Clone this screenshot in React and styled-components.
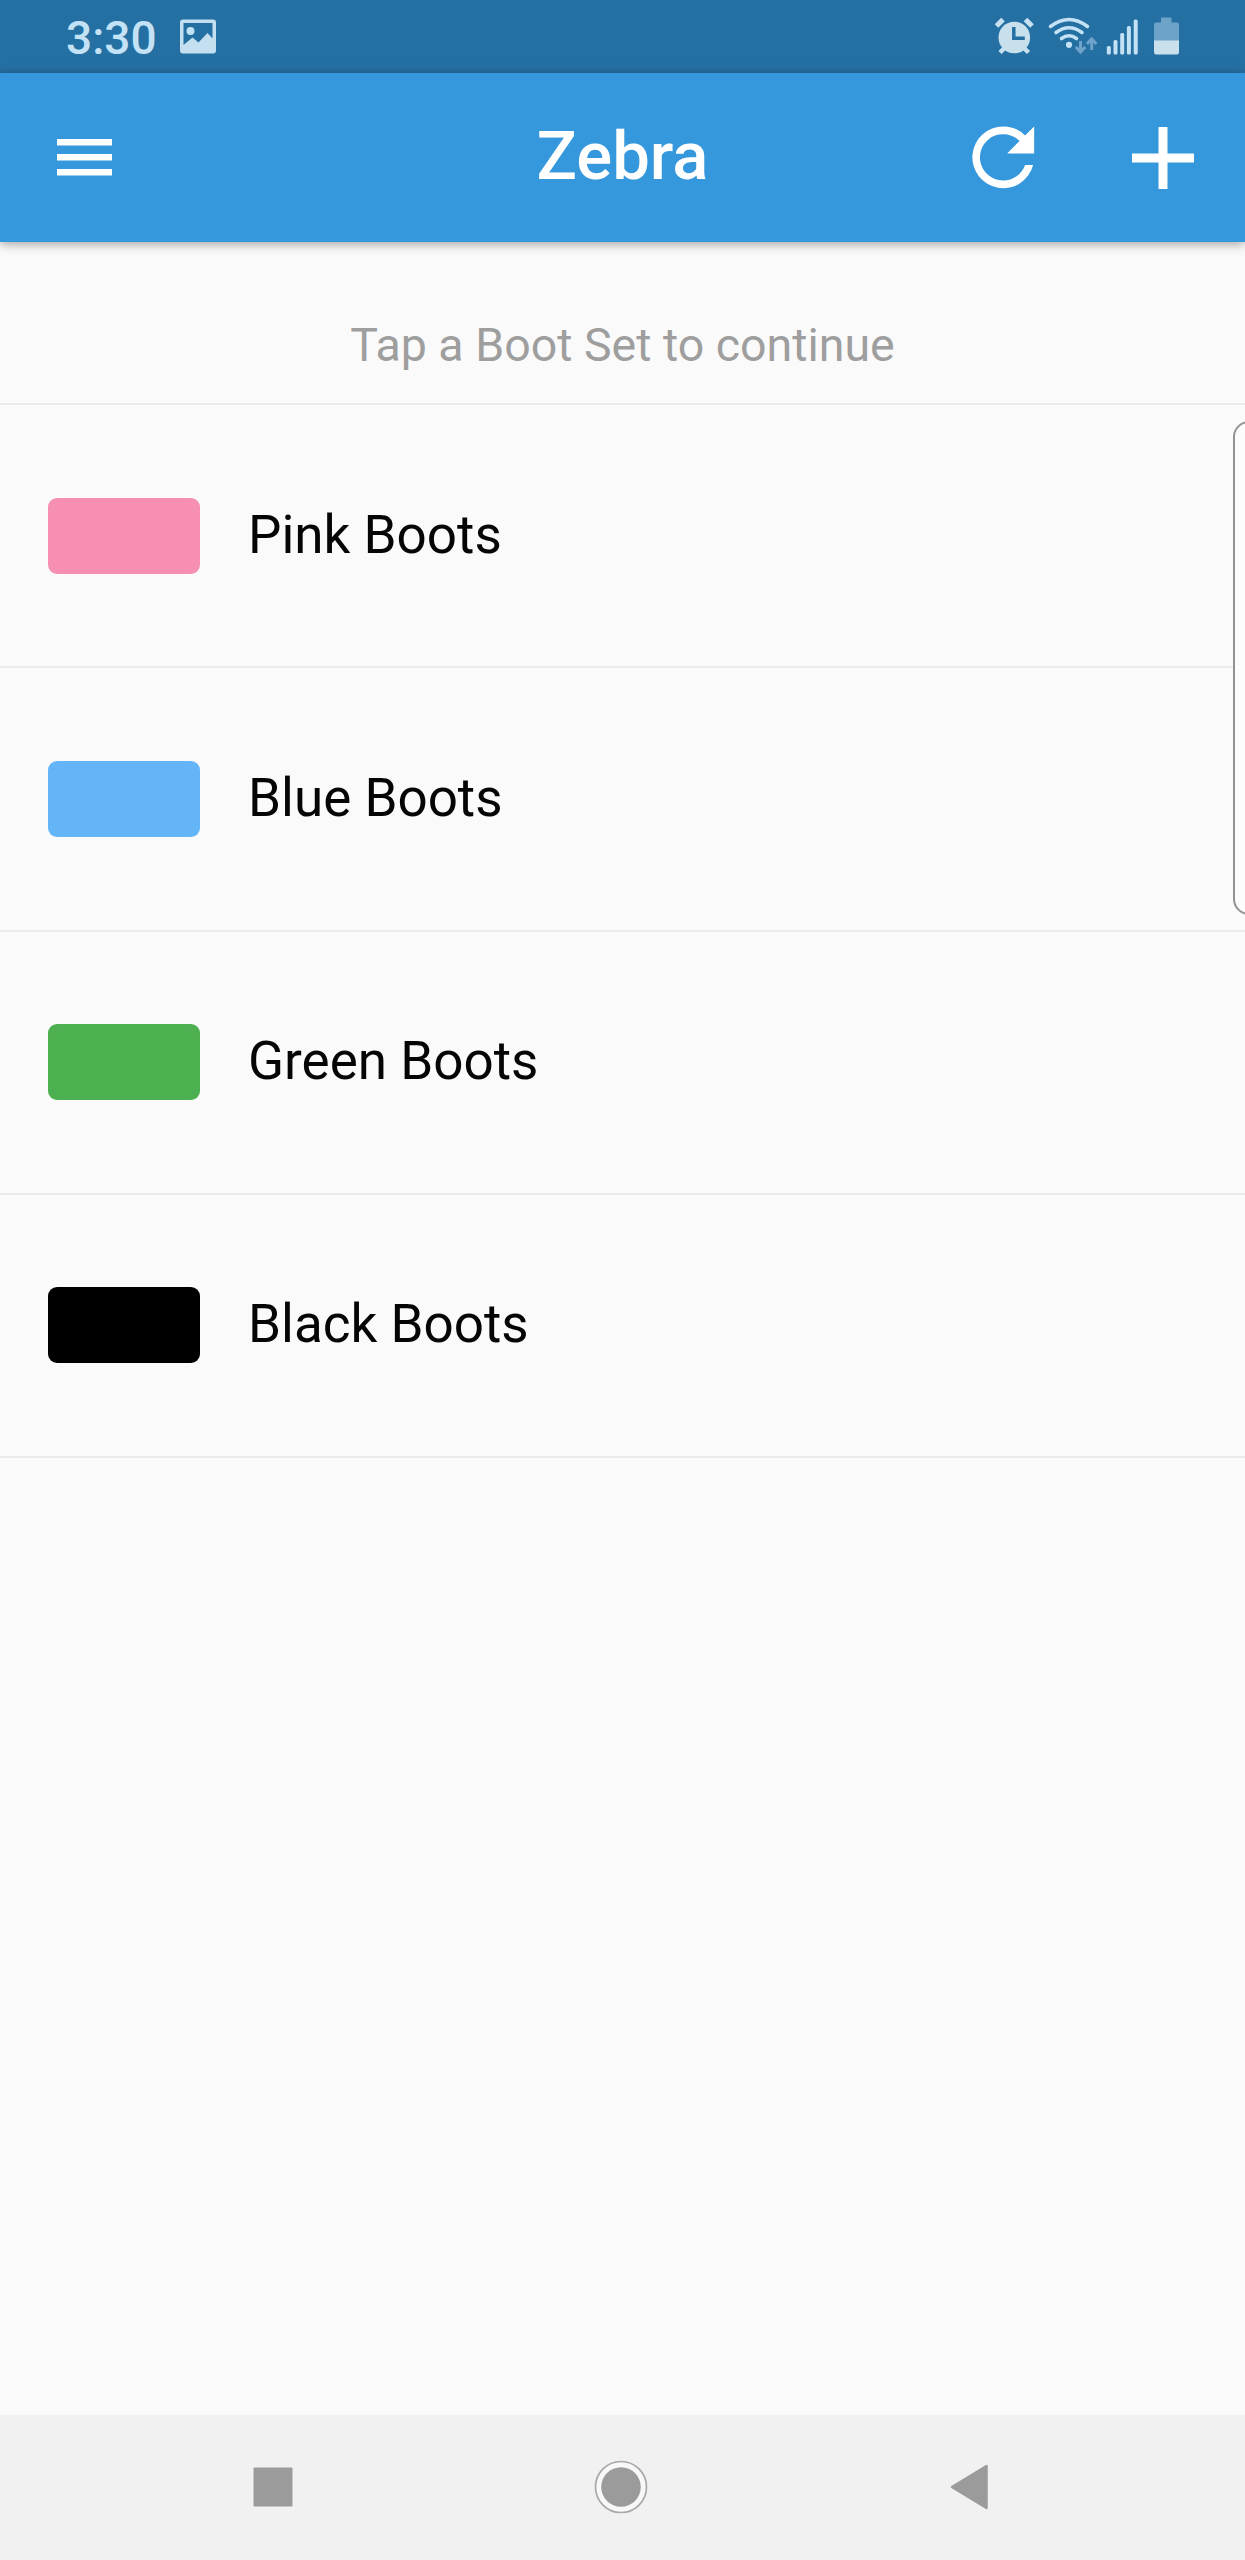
import React from "react";
import styled, { createGlobalStyle } from "styled-components";

const GlobalStyle = createGlobalStyle`
  * { box-sizing: border-box; }
  body { margin: 0; background: #fafafa; }
`;

const Screen = styled.div`
  position: relative;
  display: flex;
  flex-direction: column;
  width: 1245px;
  height: 2560px;
  overflow: hidden;
  background: #fafafa;
  font-family: Roboto, "Liberation Sans", sans-serif;
`;

const StatusBar = styled.div`
  display: flex;
  flex: none;
  align-items: flex-start;
  justify-content: space-between;
  height: 73px;
  padding: 0 65px 0 66px;
  background: #2570a3;
`;

const StatusGroup = styled.div`
  display: flex;
  height: 73px;
`;

const Clock = styled.span`
  width: 114px;
  color: #c4e2f6;
  font-size: 46px;
  font-weight: 500;
  line-height: 76px;
  white-space: nowrap;
`;

const Glyph = styled.svg`
  display: block;
  flex: none;
`;

const AppBar = styled.header`
  position: relative;
  z-index: 1;
  display: grid;
  flex: none;
  grid-template-columns: 1fr auto 1fr;
  align-items: center;
  height: 169px;
  background: #3598dc;
  box-shadow: 0 2px 10px rgba(0, 0, 0, 0.36);
`;

const BarButton = styled.button`
  display: flex;
  align-items: center;
  justify-content: center;
  width: ${(p) => p.$width}px;
  height: 169px;
  padding: 0;
  border: 0;
  background: transparent;
  color: #fff;
`;

const Title = styled.h1`
  margin: 0;
  padding-bottom: 3px;
  color: #fff;
  font-size: 67px;
  font-weight: 500;
  line-height: 80px;
`;

const Actions = styled.div`
  display: flex;
  justify-content: flex-end;
`;

const Content = styled.main`
  flex: 1;
`;

const Hint = styled.p`
  height: 163px;
  margin: 0;
  padding-top: 75px;
  border-bottom: 2px solid #ebebeb;
  color: #9e9e9e;
  font-size: 46.500px;
  line-height: 56px;
  text-align: center;
`;

const List = styled.ul`
  margin: 0;
  padding: 0;
  list-style: none;
`;

const Row = styled.li`
  display: flex;
  align-items: center;
  gap: 48px;
  height: 263.25px;
  padding: 0 48px;
  border-bottom: 2px solid #ebebeb;
`;

const Swatch = styled.span`
  width: 152px;
  height: 76px;
  border-radius: 9px;
  background: ${(p) => p.$color};
`;

const Label = styled.span`
  padding-bottom: 2px;
  color: #050505;
  font-size: 53px;
  line-height: 64px;
`;

const EdgeHandle = styled.div`
  position: absolute;
  top: 421px;
  right: -20px;
  width: 32px;
  height: 494px;
  border: 2px solid #929292;
  border-radius: 17px;
  background: #fcfcfc;
`;

const NavBar = styled.nav`
  display: flex;
  flex: none;
  align-items: center;
  justify-content: center;
  height: 145px;
  padding-right: 4px;
  background: #f1f1f1;
`;

const NavButton = styled.button`
  display: flex;
  align-items: center;
  justify-content: center;
  width: 348px;
  height: 145px;
  padding: 0 0 1px;
  border: 0;
  background: transparent;
`;

const sets = [
  { name: "Pink Boots", color: "#f78fb3" },
  { name: "Blue Boots", color: "#64b5f8" },
  { name: "Green Boots", color: "#4caf50" },
  { name: "Black Boots", color: "#000000" },
];

const PictureIcon = () => (
  <Glyph width="36" height="73" viewBox="0 0 36 73">
    <path
      fill="#c4dfef"
      fillRule="evenodd"
      d="M3 19.500h30a3 3 0 0 1 3 3v28a3 3 0 0 1-3 3H3a3 3 0 0 1-3-3v-28a3 3 0 0 1 3-3ZM3.500 23v22l9-7.500 6 5 9-9.500 5 5.500V23Z"
    />
    <circle cx="10.500" cy="31" r="4" fill="#c4e2f6" />
  </Glyph>
);

const SystemIcons = () => (
  <Glyph width="190" height="73" viewBox="990 0 190 73">
    <g stroke="#c8e1f1" fill="none">
      <path strokeWidth="5" d="m996.500 26 6.500-6.500M1025.500 19.500l6.500 6.500" />
      <path strokeWidth="4.500" d="m1000 52.500 6-6M1028.500 52.500l-6-6" />
    </g>
    <circle cx="1014.300" cy="37.500" r="15.800" fill="#c8dfec" />
    <path d="M1013.800 27v11.300h11" fill="none" stroke="#2570a3" strokeWidth="3.500" />
    <g fill="none" stroke="#c4e2f6" strokeWidth="3.600" strokeLinecap="round">
      <path d="M1050.500 26.500q18.500-14 37 0" />
      <path d="M1056 32.500q13-9.500 26 0" />
      <path d="M1061.500 38.500q7.500-5.500 15 0" />
    </g>
    <circle cx="1069" cy="44.800" r="3.100" fill="#c4e2f6" />
    <g fill="none" stroke="#6fa3cb" strokeWidth="3">
      <path d="M1080.500 41v11M1075.800 47l4.700 5 4.700-5" />
      <path d="M1091.700 50V39M1087 44l4.700-5 4.700 5" />
    </g>
    <g fill="#c4e2f6">
      <rect x="1106.800" y="46" width="4" height="8.500" rx="1.600" />
      <rect x="1113.500" y="40" width="4" height="14.500" rx="1.600" />
      <rect x="1120.200" y="33" width="4" height="21.500" rx="1.600" />
      <rect x="1126.900" y="26" width="4" height="28.500" rx="1.600" />
      <rect x="1133.700" y="19.500" width="4" height="35" rx="1.600" />
    </g>
    <path fill="#6ea3c9" d="M1161 17.500h10.500v5h5.500a2 2 0 0 1 2 2V41h-25V24.500a2 2 0 0 1 2-2h5Z" />
    <path fill="#cae0ed" d="M1154 40.500h25V52a2.500 2.500 0 0 1-2.500 2.500h-20A2.500 2.500 0 0 1 1154 52Z" />
  </Glyph>
);

export default function App() {
  return (
    <>
      <GlobalStyle />
      <Screen>
        <StatusBar>
          <StatusGroup>
            <Clock>3:30</Clock>
            <PictureIcon />
          </StatusGroup>
          <SystemIcons />
        </StatusBar>

        <AppBar>
          <BarButton $width={169} aria-label="Menu">
            <Glyph width="55" height="37" viewBox="0 0 55 37" fill="currentColor">
              <path d="M0 0h55v6.500H0ZM0 15h55v6.500H0ZM0 30h55v6.500H0Z" />
            </Glyph>
          </BarButton>
          <Title>Zebra</Title>
          <Actions>
            <BarButton $width={153} aria-label="Refresh">
              <Glyph width="92.600" height="92.600" viewBox="0 0 24 24" fill="currentColor">
                <path d="M17.650 6.350A7.958 7.958 0 0 0 12 4a8 8 0 1 0 7.730 10h-2.080A5.990 5.990 0 0 1 12 18a6 6 0 1 1 4.220-10.220L13 11h7V4z" />
              </Glyph>
            </BarButton>
            <BarButton $width={165} aria-label="Add">
              <Glyph width="62" height="62" viewBox="0 0 62 62" fill="currentColor">
                <path d="M26.500 0h9v26.500H62v9H35.500V62h-9V35.500H0v-9h26.500z" />
              </Glyph>
            </BarButton>
          </Actions>
        </AppBar>

        <Content>
          <Hint>Tap a Boot Set to continue</Hint>
          <List>
            {sets.map((set) => (
              <Row key={set.name}>
                <Swatch $color={set.color} />
                <Label>{set.name}</Label>
              </Row>
            ))}
          </List>
        </Content>

        <EdgeHandle />

        <NavBar>
          <NavButton aria-label="Recent apps">
            <Glyph width="40" height="40" viewBox="0 0 40 40">
              <rect x=".5" y=".5" width="39" height="39" rx="1" fill="#9b9b9b" />
            </Glyph>
          </NavButton>
          <NavButton aria-label="Home">
            <Glyph width="54" height="54" viewBox="0 0 54 54">
              <circle cx="27" cy="27" r="25.500" fill="#f8f8f8" stroke="#a8a8a8" strokeWidth="1.700" />
              <circle cx="27" cy="27" r="19.800" fill="#9b9b9b" />
            </Glyph>
          </NavButton>
          <NavButton aria-label="Back">
            <Glyph width="38" height="46" viewBox="0 0 38 46">
              <path
                d="M2 23 36.500 2v42Z"
                fill="#9b9b9b"
                stroke="#9b9b9b"
                strokeWidth="2.500"
                strokeLinejoin="round"
              />
            </Glyph>
          </NavButton>
        </NavBar>
      </Screen>
    </>
  );
}
